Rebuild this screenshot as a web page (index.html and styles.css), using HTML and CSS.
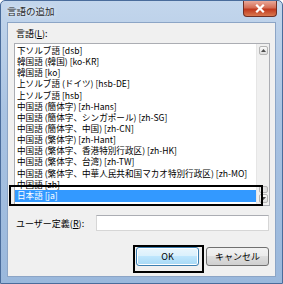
FILE: index.html
```html
<!DOCTYPE html>
<html lang="ja">
<head>
    <meta charset="UTF-8">
    <title>言語の追加</title>
    <link rel="stylesheet" href="styles.css">
</head>
<body>
    <div class="window">
        <div class="titlebar">
            <span class="title">言語の追加</span>
            <div class="close">
                <svg width="10" height="9" viewBox="0 0 10 9">
                    <path d="M2 1.5 L8 7.5 M8 1.5 L2 7.5" stroke="#fff" stroke-width="2.2" stroke-linecap="square"/>
                </svg>
            </div>
        </div>

        <div class="client">
            <div class="label">言語(<u>L</u>):</div>
            <div class="listbox">
                <div class="items">
                    <div class="item">下ソルブ語 [dsb]</div>
                    <div class="item">韓国語 (韓国) [ko-KR]</div>
                    <div class="item">韓国語 [ko]</div>
                    <div class="item">上ソルブ語 (ドイツ) [hsb-DE]</div>
                    <div class="item">上ソルブ語 [hsb]</div>
                    <div class="item">中国語 (簡体字) [zh-Hans]</div>
                    <div class="item">中国語 (簡体字、シンガポール) [zh-SG]</div>
                    <div class="item">中国語 (簡体字、中国) [zh-CN]</div>
                    <div class="item">中国語 (繁体字) [zh-Hant]</div>
                    <div class="item">中国語 (繁体字、香港特別行政区) [zh-HK]</div>
                    <div class="item">中国語 (繁体字、台湾) [zh-TW]</div>
                    <div class="item">中国語 (繁体字、中華人民共和国マカオ特別行政区) [zh-MO]</div>
                    <div class="item">中国語 [zh]</div>
                    <div class="item selected">日本語 [ja]</div>
                </div>
                <div class="scrollbar">
                    <div class="sb-btn">
                        <svg width="5" height="3" viewBox="0 0 5 3"><path d="M0 3 L2.5 0 L5 3 Z" fill="#4d4d4d"/></svg>
                    </div>
                    <div class="sb-track"></div>
                    <div class="sb-thumb"></div>
                    <div class="sb-btn">
                        <svg width="5" height="3" viewBox="0 0 5 3"><path d="M0 0 L2.5 3 L5 0 Z" fill="#4d4d4d"/></svg>
                    </div>
                </div>
            </div>

            <div class="custom-row">
                <span class="label">ユーザー定義(<u>R</u>):</span>
                <div class="textbox"></div>
            </div>

            <div class="buttons">
                <button class="btn default">OK</button>
                <button class="btn">キャンセル</button>
            </div>
        </div>

        <!-- 注釈の黒枠 -->
        <div class="mark mark-list"></div>
        <div class="mark mark-ok"></div>
    </div>
</body>
</html>
```

FILE: styles.css
```css
body {
    margin: 0;
    width: 283px;
    height: 284px;
    overflow: hidden;
    font-family: "Noto Sans CJK JP", "Noto Sans", sans-serif;
    font-size: 9px;
    color: #000;
}
.window {
    position: relative;
    box-sizing: border-box;
    width: 283px;
    height: 284px;
    border: 1px solid #4a6c9b;
    border-radius: 5px 5px 0 0;
    background: linear-gradient(to bottom, #c3d6ec, #a9c3e2 40%, #9ab8dc);
    padding: 0 6px 6px;
    display: flex;
    flex-direction: column;
}
.titlebar {
    height: 21px;
    display: flex;
    align-items: flex-start;
    justify-content: space-between;
}
.title {
    margin-top: 3px;
    font-size: 9.5px;
    color: #2a2a2a;
    text-shadow: 0 0 4px #fff;
}
.close {
    width: 34px;
    height: 16px;
    margin-right: -1px;
    box-sizing: border-box;
    border: 1px solid #6f2f25;
    border-top: none;
    border-radius: 0 0 4px 4px;
    background: linear-gradient(to bottom, #e9a899, #d46d55 45%, #c0391e 55%, #d9784f);
    display: flex;
    align-items: center;
    justify-content: center;
}
.client {
    flex: 1;
    background: #f0f0f0;
    border: 1px solid #8ca5c6;
    padding: 5px 5px 0 6px;
    display: flex;
    flex-direction: column;
}
.label {
    margin-left: 2px;
    height: 15px;
    line-height: 11px;
}
.listbox {
    height: 163px;
    box-sizing: border-box;
    border: 1px solid #abadb3;
    background: #fff;
    display: flex;
    overflow: hidden;
}
.items {
    flex: 1;
    padding-top: 1px;
    font-size: 8.6px;
}
.item {
    height: 11.15px;
    line-height: 11px;
    padding-left: 2px;
    white-space: nowrap;
}
.item.selected {
    background: #3399ff;
    color: #fff;
    height: 12px;
}
.scrollbar {
    width: 12px;
    background: #f0f0f0;
    border-left: 1px solid #e6e6e6;
    display: flex;
    flex-direction: column;
    align-items: center;
    padding: 2px 0;
}
.sb-btn {
    width: 9px;
    height: 9px;
    box-sizing: border-box;
    border: 1px solid #b4b4b4;
    border-radius: 2px;
    background: linear-gradient(to bottom, #fafafa, #dcdcdc);
    display: flex;
    align-items: center;
    justify-content: center;
}
.sb-track {
    flex: 1;
}
.sb-thumb {
    width: 9px;
    height: 7px;
    box-sizing: border-box;
    border: 1px solid #b4b4b4;
    border-radius: 2px;
    background: linear-gradient(to right, #f4f4f4, #dadada);
    margin-bottom: 1px;
}
.custom-row {
    display: flex;
    align-items: center;
    margin-top: 9px;
    height: 16px;
}
.custom-row .label {
    width: 80px;
    height: auto;
}
.textbox {
    flex: 1;
    height: 16px;
    box-sizing: border-box;
    border: 1px solid #d6d6d6;
    border-top-color: #abadb3;
    background: #fff;
    margin-right: 1px;
}
.buttons {
    display: flex;
    justify-content: flex-end;
    gap: 7px;
    margin-top: 16px;
    margin-right: 1px;
}
.btn {
    width: 63px;
    height: 19px;
    padding: 0;
    font-family: inherit;
    font-size: 9px;
    color: #000;
    border: 1px solid #707070;
    border-radius: 3px;
    background: linear-gradient(to bottom, #f2f2f2, #ebebeb 50%, #dddddd 50%, #cfcfcf);
}
.btn.default {
    border-color: #3c7fb1;
    background: linear-gradient(to bottom, #eaf6fd, #d9f0fc 50%, #bee6fd 50%, #a7d9f5);
    box-shadow: inset 0 0 0 1px #fff;
}
.mark {
    position: absolute;
    border: 2px solid #000;
}
.mark-list {
    left: 8px;
    top: 184px;
    width: 250px;
    height: 17px;
}
.mark-ok {
    left: 132px;
    top: 244px;
    width: 67px;
    height: 24px;
}
```
